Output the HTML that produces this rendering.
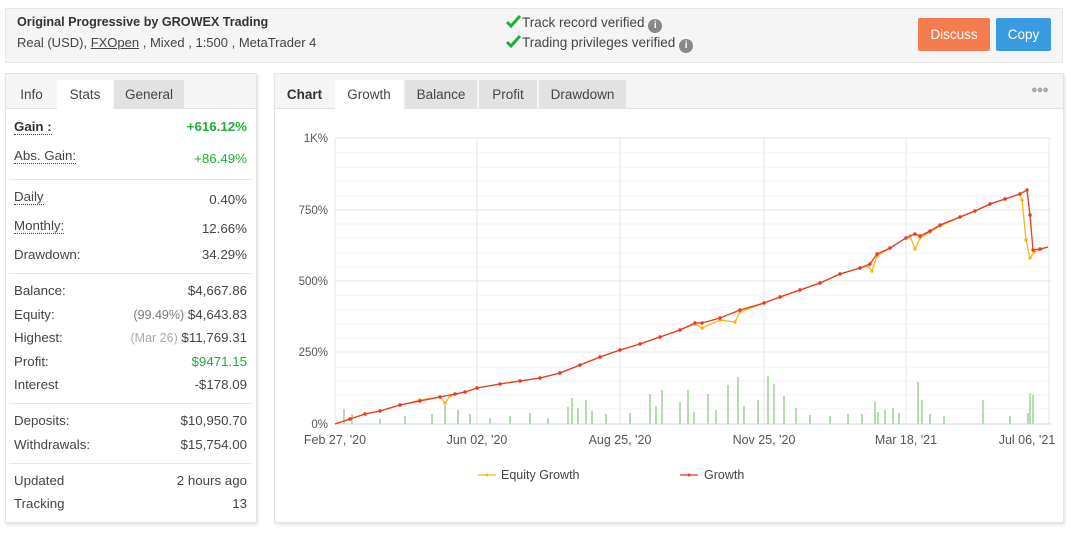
<!DOCTYPE html>
<html><head><meta charset="utf-8"><style>
*{box-sizing:border-box;margin:0;padding:0}
body{width:1073px;height:534px;background:#fff;font-family:"Liberation Sans",sans-serif;color:#444;position:relative;overflow:hidden;font-size:13.5px}
.a{position:absolute}
.hdr{left:5px;top:8px;width:1058px;height:55px;background:#f5f5f5;border:1px solid #e6e6e6}
.panel{background:#fff;border:1px solid #e3e3e3;box-shadow:1px 2px 3px rgba(0,0,0,.12)}
.tabbar{background:#f5f5f5;border-bottom:1px solid #e3e3e3}
.tab{position:absolute;top:6px;height:30px;line-height:30px;text-align:center;font-size:13.5px;color:#444}
.g{background:#e2e2e2}.w{background:#fff}
.row{position:absolute;left:14px;width:233px;font-size:13.3px;color:#444}
.row span.r{position:absolute;right:0}
.ul{border-bottom:1px dotted #444}
.sep{position:absolute;left:9px;width:242px;height:1px;background:#e6e6e6}
.grn{color:#1eae3c}
.btn{position:absolute;top:18px;height:33px;line-height:33px;color:#fff;text-align:center;font-size:13.5px;border-radius:2px}
.info{display:inline-block;width:14px;height:14px;border-radius:50%;background:#888;color:#fff;font-size:10px;line-height:14px;text-align:center;font-weight:bold;vertical-align:-1px}
.ck{display:inline-block;vertical-align:-1px;margin-right:1px}
</style></head><body>
<div class="a hdr"></div>
<div class="a" style="left:17px;top:15px;font-weight:bold;font-size:12.6px;color:#333">Original Progressive by GROWEX Trading</div>
<div class="a" style="left:17px;top:35px;font-size:13px;color:#444">Real (USD), <u>FXOpen</u> , Mixed , 1:500 , MetaTrader 4</div>
<div class="a" style="left:506px;top:15px;font-size:13.5px"><svg class="ck" width="15" height="13" viewBox="0 0 15 13"><path d="M1 7l4 4 9-10" stroke="#1eae3c" stroke-width="3" fill="none"/></svg>Track record verified <span class="info">i</span></div>
<div class="a" style="left:506px;top:35px;font-size:13.5px"><svg class="ck" width="15" height="13" viewBox="0 0 15 13"><path d="M1 7l4 4 9-10" stroke="#1eae3c" stroke-width="3" fill="none"/></svg>Trading privileges verified <span class="info">i</span></div>
<div class="btn" style="left:918px;width:72px;background:#f47c4e">Discuss</div>
<div class="btn" style="left:996px;width:55px;background:#3b9be0">Copy</div>

<div class="a panel" style="left:5px;top:73px;width:252px;height:450px"></div>
<div class="a tabbar" style="left:6px;top:74px;width:250px;height:35px"></div>
<div class="tab" style="left:6px;top:80px;width:51px">Info</div>
<div class="tab w" style="left:57px;top:80px;width:56px;height:29px">Stats</div>
<div class="tab g" style="left:114px;top:80px;width:70px;height:29px">General</div>

<div class="row" style="top:119px"><b class="ul" style="color:#333">Gain :</b><span class="r grn"><b>+616.12%</b></span></div>
<div class="row" style="top:148px"><span class="ul">Abs. Gain:</span><span class="r grn" style="top:3px">+86.49%</span></div>
<div class="sep" style="top:179px"></div>
<div class="row" style="top:189px"><span class="ul">Daily</span><span class="r" style="top:3px">0.40%</span></div>
<div class="row" style="top:218px"><span class="ul">Monthly:</span><span class="r" style="top:3px">12.66%</span></div>
<div class="row" style="top:247px">Drawdown:<span class="r">34.29%</span></div>
<div class="sep" style="top:273px"></div>
<div class="row" style="top:283px">Balance:<span class="r">$4,667.86</span></div>
<div class="row" style="top:307px">Equity:<span class="r"><span style="color:#777;font-size:12.5px">(99.49%)</span> $4,643.83</span></div>
<div class="row" style="top:330px">Highest:<span class="r"><span style="color:#aaa;font-size:12.5px">(Mar 26)</span> $11,769.31</span></div>
<div class="row" style="top:354px">Profit:<span class="r grn">$9471.15</span></div>
<div class="row" style="top:377px">Interest<span class="r">-$178.09</span></div>
<div class="sep" style="top:403px"></div>
<div class="row" style="top:413px">Deposits:<span class="r">$10,950.70</span></div>
<div class="row" style="top:437px">Withdrawals:<span class="r">$15,754.00</span></div>
<div class="sep" style="top:463px"></div>
<div class="row" style="top:473px">Updated<span class="r">2 hours ago</span></div>
<div class="row" style="top:496px">Tracking<span class="r">13</span></div>

<div class="a panel" style="left:274px;top:73px;width:790px;height:450px"></div>
<div class="a tabbar" style="left:275px;top:74px;width:788px;height:35px"></div>
<div class="tab" style="left:275px;top:80px;width:59px;font-weight:bold;color:#333">Chart</div>
<div class="tab w" style="left:335px;top:80px;width:68px;height:29px">Growth</div>
<div class="tab g" style="left:405px;top:80px;width:72px;height:29px">Balance</div>
<div class="tab g" style="left:479px;top:80px;width:58px;height:29px">Profit</div>
<div class="tab g" style="left:539px;top:80px;width:87px;height:29px">Drawdown</div>
<div class="a" style="left:1031px;top:84px;color:#aaa;font-size:11px;letter-spacing:-1px">●●●</div>
<svg class="a" style="left:0;top:0" width="1073" height="534" viewBox="0 0 1073 534">
<defs>
<marker id="mr" markerWidth="3" markerHeight="3" refX="1.5" refY="1.5"><circle cx="1.5" cy="1.5" r="1.3" fill="#e8382c"/></marker>
<marker id="my" markerWidth="3" markerHeight="3" refX="1.5" refY="1.5"><circle cx="1.5" cy="1.5" r="1.3" fill="#f7b718"/></marker>
</defs>
<g stroke="#f2f2f2" stroke-width="1">
<line x1="335" y1="153" x2="1051" y2="153"/><line x1="335" y1="167" x2="1051" y2="167"/><line x1="335" y1="181" x2="1051" y2="181"/><line x1="335" y1="196" x2="1051" y2="196"/>
<line x1="335" y1="224" x2="1051" y2="224"/><line x1="335" y1="238" x2="1051" y2="238"/><line x1="335" y1="253" x2="1051" y2="253"/><line x1="335" y1="267" x2="1051" y2="267"/>
<line x1="335" y1="295" x2="1051" y2="295"/><line x1="335" y1="310" x2="1051" y2="310"/><line x1="335" y1="324" x2="1051" y2="324"/><line x1="335" y1="338" x2="1051" y2="338"/>
<line x1="335" y1="367" x2="1051" y2="367"/><line x1="335" y1="381" x2="1051" y2="381"/><line x1="335" y1="395" x2="1051" y2="395"/><line x1="335" y1="409" x2="1051" y2="409"/>
</g>
<g stroke="#e4e4e4" stroke-width="1">
<line x1="335" y1="138" x2="1051" y2="138"/><line x1="335" y1="210" x2="1051" y2="210"/><line x1="335" y1="281" x2="1051" y2="281"/><line x1="335" y1="352" x2="1051" y2="352"/>
<line x1="335" y1="138" x2="335" y2="424"/><line x1="477" y1="138" x2="477" y2="424"/><line x1="620" y1="138" x2="620" y2="424"/><line x1="764" y1="138" x2="764" y2="424"/><line x1="906" y1="138" x2="906" y2="424"/><line x1="1049" y1="138" x2="1049" y2="424"/>
</g>
<line x1="335" y1="424" x2="1051" y2="424" stroke="#c9d8ea"/>
<g stroke="#b5ddb0" stroke-width="2">
<line x1="344" y1="424" x2="344" y2="409"/><line x1="352" y1="424" x2="352" y2="414"/><line x1="380" y1="424" x2="380" y2="419"/><line x1="405" y1="424" x2="405" y2="416"/>
<line x1="432" y1="424" x2="432" y2="414"/><line x1="445" y1="424" x2="445" y2="405"/><line x1="458" y1="424" x2="458" y2="410"/><line x1="470" y1="424" x2="470" y2="414"/>
<line x1="490" y1="424" x2="490" y2="418"/><line x1="510" y1="424" x2="510" y2="416"/><line x1="530" y1="424" x2="530" y2="413"/><line x1="548" y1="424" x2="548" y2="418"/>
<line x1="568" y1="424" x2="568" y2="407"/><line x1="572" y1="424" x2="572" y2="398"/><line x1="578" y1="424" x2="578" y2="408"/><line x1="586" y1="424" x2="586" y2="400"/><line x1="592" y1="424" x2="592" y2="411"/>
<line x1="606" y1="424" x2="606" y2="414"/><line x1="630" y1="424" x2="630" y2="413"/><line x1="650" y1="424" x2="650" y2="394"/><line x1="656" y1="424" x2="656" y2="406"/><line x1="662" y1="424" x2="662" y2="390"/>
<line x1="680" y1="424" x2="680" y2="402"/><line x1="688" y1="424" x2="688" y2="390"/><line x1="694" y1="424" x2="694" y2="412"/><line x1="708" y1="424" x2="708" y2="394"/><line x1="716" y1="424" x2="716" y2="410"/>
<line x1="728" y1="424" x2="728" y2="385"/><line x1="738" y1="424" x2="738" y2="377"/><line x1="744" y1="424" x2="744" y2="406"/><line x1="758" y1="424" x2="758" y2="400"/>
<line x1="768" y1="424" x2="768" y2="376"/><line x1="774" y1="424" x2="774" y2="384"/><line x1="784" y1="424" x2="784" y2="396"/><line x1="796" y1="424" x2="796" y2="408"/>
<line x1="810" y1="424" x2="810" y2="415"/><line x1="830" y1="424" x2="830" y2="416"/><line x1="848" y1="424" x2="848" y2="414"/><line x1="862" y1="424" x2="862" y2="414"/>
<line x1="875" y1="424" x2="875" y2="402"/><line x1="878" y1="424" x2="878" y2="412"/><line x1="885" y1="424" x2="885" y2="410"/><line x1="893" y1="424" x2="893" y2="408"/><line x1="899" y1="424" x2="899" y2="413"/>
<line x1="918" y1="424" x2="918" y2="382"/><line x1="922" y1="424" x2="922" y2="400"/><line x1="930" y1="424" x2="930" y2="414"/><line x1="944" y1="424" x2="944" y2="416"/>
<line x1="983" y1="424" x2="983" y2="400"/><line x1="1010" y1="424" x2="1010" y2="416"/><line x1="1028" y1="424" x2="1028" y2="413"/><line x1="1030" y1="424" x2="1030" y2="393"/><line x1="1033" y1="424" x2="1033" y2="395"/>
</g>
<polyline fill="none" stroke="#f7b718" stroke-width="1.3" marker-mid="url(#my)" points="335,424 350,419 365,414 380,411 400,405 420,400 440,397 445,403 450,396 465,392 477,388 500,384 520,381 540,378 560,373 580,365 600,357 620,350 640,344 660,337 680,330 695,324 702,328 720,320 735,322 740,312 764,303 780,297 800,290 820,283 840,274 860,268 868,266 872,271 877,256 890,248 906,238 910,236 915,249 920,238 930,232 940,226 960,217 975,211 990,204 1005,199 1020,194 1022,200 1026,240 1030,258 1034,252 1048,247"/>
<polyline fill="none" stroke="#e8382c" stroke-width="1.3" marker-mid="url(#mr)" points="335,424 350,419 365,414 380,411 400,405 420,401 440,397 455,394 465,392 477,388 500,384 520,381 540,378 560,373 580,365 600,357 620,350 640,344 660,337 680,330 695,323 702,323 720,318 740,310 764,303 780,297 800,290 820,283 840,274 860,268 870,264 877,254 890,248 906,238 915,234 920,236 930,231 940,225 960,217 975,211 990,204 1005,199 1020,194 1027,190 1030,215 1033,250 1040,249 1048,247"/>
<g font-family="Liberation Sans,sans-serif" font-size="11.5" fill="#555" text-anchor="end">
<text x="328" y="142">1K%</text><text x="328" y="214">750%</text><text x="328" y="285">500%</text><text x="328" y="356">250%</text><text x="328" y="428">0%</text>
</g>
<g font-family="Liberation Sans,sans-serif" font-size="12.5" fill="#555" text-anchor="middle">
<text x="335" y="444">Feb 27, '20</text><text x="477" y="444">Jun 02, '20</text><text x="620" y="444">Aug 25, '20</text><text x="764" y="444">Nov 25, '20</text><text x="906" y="444">Mar 18, '21</text><text x="1027" y="444">Jul 06, '21</text>
</g>
<line x1="478" y1="475" x2="496" y2="475" stroke="#f7b718" stroke-width="1.3"/><circle cx="487" cy="475" r="1.5" fill="#f7b718"/>
<line x1="680" y1="475" x2="698" y2="475" stroke="#e8382c" stroke-width="1.3"/><circle cx="689" cy="475" r="1.5" fill="#e8382c"/>
<g font-family="Liberation Sans,sans-serif" font-size="12.5" fill="#444">
<text x="501" y="479">Equity Growth</text><text x="704" y="479">Growth</text>
</g>
</svg>
</body></html>
